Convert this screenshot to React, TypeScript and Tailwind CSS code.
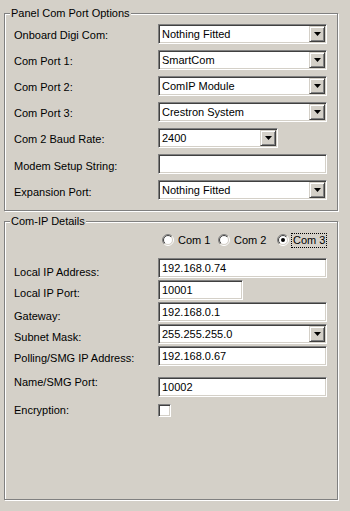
import React from "react";

const sunken =
  "border border-t-[#808080] border-l-[#808080] border-b-white border-r-white shadow-[inset_1px_1px_0_#404040,inset_-1px_-1px_0_#d4d0c8] bg-white";

function DropArrow() {
  return (
    <div className="mr-[1px] flex h-[16px] w-[16px] shrink-0 items-center justify-center border border-t-[#d4d0c8] border-l-[#d4d0c8] border-b-[#404040] border-r-[#404040] bg-[#d4d0c8] shadow-[inset_1px_1px_0_#fff,inset_-1px_-1px_0_#808080]">
      <svg width="7" height="4" viewBox="0 0 7 4">
        <path d="M0 0h7L3.5 4z" fill="#000" />
      </svg>
    </div>
  );
}

function Combo({ value, w = "w-[169px]" }: { value: string; w?: string }) {
  return (
    <div className={`${sunken} ${w} flex h-[20px] items-center justify-between`}>
      <span className="pl-[3px] leading-[14px]">{value}</span>
      <DropArrow />
    </div>
  );
}

function Edit({ value, w = "w-[169px]" }: { value: string; w?: string }) {
  return (
    <div className={`${sunken} ${w} flex h-[20px] items-center`}>
      <span className="pl-[3px] leading-[14px]">{value}</span>
    </div>
  );
}

function Radio({ checked }: { checked?: boolean }) {
  return (
    <svg width="12" height="12" viewBox="0 0 12 12" className="shrink-0">
      <defs>
        <linearGradient id="rOut" x1="0" y1="0" x2="1" y2="1">
          <stop offset="0.5" stopColor="#808080" />
          <stop offset="0.5" stopColor="#ffffff" />
        </linearGradient>
        <linearGradient id="rIn" x1="0" y1="0" x2="1" y2="1">
          <stop offset="0.5" stopColor="#404040" />
          <stop offset="0.5" stopColor="#d4d0c8" />
        </linearGradient>
      </defs>
      <circle cx="6" cy="6" r="5.5" fill="none" stroke="url(#rOut)" />
      <circle cx="6" cy="6" r="4.5" fill="#fff" stroke="url(#rIn)" />
      {checked && <circle cx="6" cy="6" r="2" fill="#000" />}
    </svg>
  );
}

function Row({ label, children, shift = "" }: { label: string; children: React.ReactNode; shift?: string }) {
  return (
    <div className="flex items-center">
      <span className={`w-[144px] shrink-0 leading-[14px] ${shift}`}>{label}</span>
      {children}
    </div>
  );
}

function Group({ title, className, children }: { title: string; className: string; children: React.ReactNode }) {
  return (
    <div
      className={`relative w-[334px] border border-[#808080] shadow-[inset_1px_1px_0_#fff,1px_1px_0_#fff] ${className}`}
    >
      <span className="absolute left-[5px] top-[-8px] bg-[#d4d0c8] px-[1px] leading-[14px]">{title}</span>
      {children}
    </div>
  );
}

export default function App() {
  return (
    <div className="h-[511px] w-[350px] bg-[#d4d0c8] pl-[4px] pt-[13px] font-['Liberation_Sans',Arial,sans-serif] text-[11px] text-black">
      <Group title="Panel Com Port Options" className="h-[198px]">
        <div className="flex flex-col gap-[6px] pl-[9px] pt-[10px]">
          <Row label="Onboard Digi Com:" shift="translate-y-[1px]">
            <Combo value="Nothing Fitted" />
          </Row>
          <Row label="Com Port 1:" shift="translate-y-[1px]">
            <Combo value="SmartCom" />
          </Row>
          <Row label="Com Port 2:" shift="translate-y-[1px]">
            <Combo value="ComIP Module" />
          </Row>
          <Row label="Com Port 3:" shift="translate-y-[1px]">
            <Combo value="Crestron System" />
          </Row>
          <Row label="Com 2 Baud Rate:" shift="translate-y-[1px]">
            <Combo value="2400" w="w-[120px]" />
          </Row>
          <Row label="Modem Setup String:" shift="translate-y-[2px]">
            <Edit value="" />
          </Row>
          <Row label="Expansion Port:" shift="translate-y-[2px]">
            <Combo value="Nothing Fitted" />
          </Row>
        </div>
      </Group>

      <Group title="Com-IP Details" className="mt-[10px] h-[279px]">
        <div className="flex flex-col pl-[9px] pt-[10px]">
          <div className="flex h-[16px] items-center pl-[148px]">
            <div className="flex w-[56px] items-center">
              <Radio />
              <span className="ml-[2px] border border-transparent px-[1px] leading-[13px]">Com 1</span>
            </div>
            <div className="flex w-[59px] items-center">
              <Radio />
              <span className="ml-[2px] border border-transparent px-[1px] leading-[13px]">Com 2</span>
            </div>
            <div className="flex items-center">
              <Radio checked />
              <span className="ml-[2px] border border-dotted border-black px-[1px] leading-[13px]">Com 3</span>
            </div>
          </div>

          <div className="mt-[10px] flex flex-col gap-[2px]">
            <Row label="Local IP Address:" shift="translate-y-[4px]">
              <Edit value="192.168.0.74" />
            </Row>
            <Row label="Local IP Port:" shift="translate-y-[3px]">
              <Edit value="10001" w="w-[85px]" />
            </Row>
            <Row label="Gateway:" shift="translate-y-[4px]">
              <Edit value="192.168.0.1" />
            </Row>
            <Row label="Subnet Mask:" shift="translate-y-[3px]">
              <Combo value="255.255.255.0" />
            </Row>
            <Row label="Polling/SMG IP Address:" shift="translate-y-[2px]">
              <Edit value="192.168.0.67" />
            </Row>
          </div>

          <div className="mt-[11px]">
            <Row label="Name/SMG Port:" shift="-translate-y-[5px]">
              <Edit value="10002" />
            </Row>
          </div>

          <div className="mt-[6px] flex items-center">
            <span className="w-[144px] shrink-0 leading-[14px]">Encryption:</span>
            <div className={`${sunken} h-[13px] w-[13px]`} />
          </div>
        </div>
      </Group>
    </div>
  );
}
